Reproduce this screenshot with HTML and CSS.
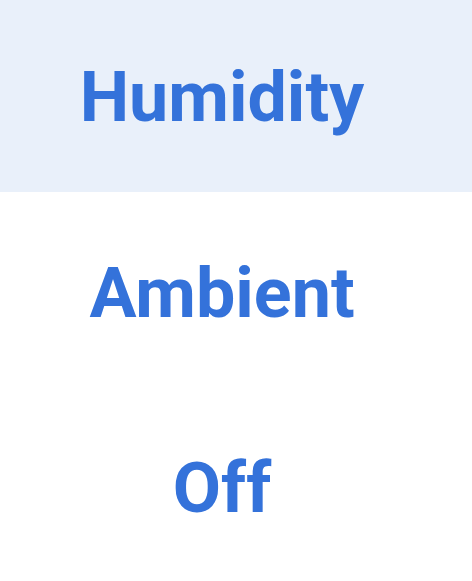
FILE: index.html
```html
<!DOCTYPE html>
<html lang="en">

<head>
    <meta charset="UTF-8">
    <meta name="viewport" content="width=device-width, initial-scale=1.0">
    <title>mode</title>
    <link rel="stylesheet" href="styles.css">
</head>

<body>
    <ul class="mode-list">
        <li class="mode-item selected">Humidity</li>
        <li class="mode-item">Ambient</li>
        <li class="mode-item">Off</li>
    </ul>
</body>

</html>
```

FILE: styles.css
```css
body {
    margin: 0;
    background-color: #FFFFFF;
    font-family: Roboto, "Liberation Sans", sans-serif;
}

.mode-list {
    list-style: none;
    margin: 0;
    padding: 0;
}

.mode-item {
    box-sizing: border-box;
    height: 195px;
    display: flex;
    align-items: center;
    justify-content: center;
    padding-right: 28px;
    font-size: 70px;
    font-weight: 700;
    color: #3472DA;
}

.mode-item.selected {
    padding-top: 2px;
    background-color: #E9F0FA;
    border-bottom: 3px solid #FFFFFF;
}
```
